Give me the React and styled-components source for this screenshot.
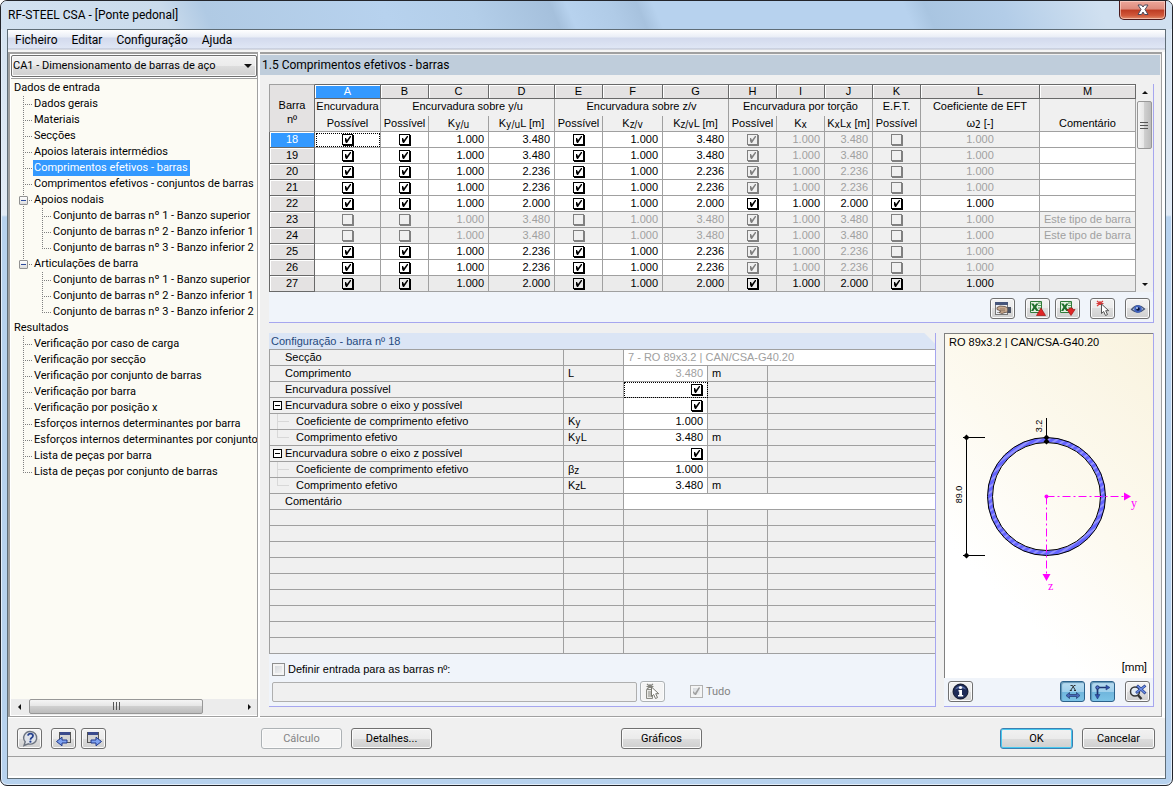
import React, { useState } from 'react';
import styled, { createGlobalStyle, css } from 'styled-components';

const GlobalStyle = createGlobalStyle`
    * { box-sizing: border-box; }
    body {
        margin: 0;
        background: #fff;
        color: #000;
        font-family: "Liberation Sans", Arial, sans-serif;
        font-size: 11px;
        line-height: 14px;
    }
    button, input, select { font: inherit; color: inherit; }
`;

const tahoma = 'Roboto, Tahoma, sans-serif';
const segoe = 'Roboto, "Segoe UI", sans-serif';

const Window = styled.div`
    display: flex;
    flex-direction: column;
    min-height: 100vh;
    padding: 0 6px 6px;
    border: 1px solid #23252b;
    border-radius: 7px;
    background: linear-gradient(#d3e2f1 0, #e2ebf5 214px, #b7d2ee 216px, #b7d2ee 100%);
    box-shadow: inset 0 0 0 1px #e3eefa;
`;

const TitleBar = styled.header`
    display: flex;
    justify-content: space-between;
    align-items: flex-start;
    height: 28px;
    margin: 0 -6px;
    padding: 0 6px;
    border-radius: 6px 6px 0 0;
    background: linear-gradient(67deg, #d3e2f1 0, #cadbec 155px, #b0cae4 195px, #b7d2ee 360px, #b3cee9 440px, #a5c0dc 515px, #b7d2ee 530px, #b0cbe7 570px, #a7c2de 595px, #b7d2ee 610px, #b7d2ee 840px, #a9c5e1 860px, #b3cde8 930px, #d0e0f0 1020px);
`;

const Title = styled.h1`
    margin: 0;
    padding: 5px 1px;
    font: 400 12px/18px ${segoe};
`;

const CloseButton = styled.button`
    display: grid;
    place-items: center;
    width: 47px;
    height: 19px;
    padding: 0;
    border: 1px solid #4a1a1c;
    border-top: 0;
    border-radius: 0 0 5px 5px;
    background: linear-gradient(#eda79a 0, #dd8a7c 45%, #bd3b22 50%, #d0573a 80%, #e08d6c 100%);
    box-shadow: inset 0 0 0 1px rgba(255, 220, 210, 0.6);
`;

const Client = styled.div`
    display: flex;
    flex-direction: column;
    flex: 1;
    border: 1px solid #5f6d77;
    background: #f0f0f0;
`;

const MenuBar = styled.nav`
    display: flex;
    gap: 14px;
    height: 22px;
    padding: 0 7px;
    background: linear-gradient(#fff 0, #e9edf6 7px, #d3daed 8px, #dfe6f5 18px, #b6bccc 19px, #f5f5f5 20px, #f5f5f5 22px);
`;

const MenuLink = styled.a`
    color: #000;
    font: 400 12px/20px ${segoe};
    text-decoration: none;
`;

const Main = styled.main`
    display: flex;
    flex: 1;
    padding-right: 3px;
    border-bottom: 1px solid #fff;
    background: #fff;
`;

const Sidebar = styled.aside`
    display: flex;
    flex-direction: column;
    width: 250px;
    margin-right: 2px;
    padding: 1px 0 1px 1px;
    border: 1px solid #a0a0a0;
    border-width: 2px 1px 1px 2px;
`;

const SelectWrap = styled.div`
    display: grid;
    align-items: center;
    > * { grid-area: 1 / 1; }
    svg {
        justify-self: end;
        margin-right: 5px;
        pointer-events: none;
    }
`;

const Select = styled.select`
    width: 100%;
    height: 22px;
    padding: 0 1px;
    border: 1px solid #707070;
    border-radius: 2px;
    background: linear-gradient(#f2f2f2 0, #ebebeb 50%, #dddddd 50%, #cfcfcf 100%);
    box-shadow: inset 0 0 0 1px #fafafa;
    font-family: ${tahoma};
    appearance: none;
`;

const Tree = styled.ul`
    flex: 1;
    margin: 1px 0 0;
    padding: 1px 0 0;
    overflow: hidden;
    border-top: 1px solid #a0a0a0;
    background: #fcfbf4;
    font-family: ${tahoma};
    list-style: none;
`;

const TreeRow = styled.li`
    display: flex;
    align-items: center;
    height: 16px;
    padding-left: ${p => (p.$root ? 2 : 12)}px;
`;

const dotsDown = 'repeating-linear-gradient(to bottom, #808080 0 1px, transparent 1px 2px) 0 0';
const dotsRight = 'repeating-linear-gradient(to right, #808080 0 1px, transparent 1px 2px) 0 8px';

// one 19px step of the dotted tree lines
const Guide = styled.span`
    display: grid;
    align-items: center;
    flex: none;
    align-self: stretch;
    width: ${p => (p.$branch ? 10 : 19)}px;
    background:
        ${p => p.$down ? `${dotsDown} / 1px ${p.$end ? '9px' : '100%'} no-repeat` : 'none'}
        ${p => p.$branch ? `, ${dotsRight} / 10px 1px no-repeat` : ''};
`;

const TreeToggle = styled.button`
    display: grid;
    place-items: center;
    width: 9px;
    height: 9px;
    margin: 0 0 0 -4px;
    padding: 0;
    border: 1px solid #919191;
    border-radius: 1px;
    background: linear-gradient(#fff, #dcdcdc);
    &::before {
        content: '';
        width: 5px;
        height: 1px;
        background: #2b4a9b;
    }
`;

const TreeLink = styled.a`
    padding: 0 2px 0 1px;
    background: ${p => (p.$active ? '#3399ff' : 'none')};
    color: ${p => (p.$active ? '#fff' : '#000')};
    line-height: 16px;
    text-decoration: none;
    white-space: nowrap;
`;

const HScroll = styled.div`
    display: flex;
    justify-content: space-between;
    align-items: flex-start;
    height: 16px;
    background: #ececec;
`;

const ScrollArrow = styled.button`
    display: grid;
    place-items: center;
    width: 16px;
    height: 16px;
    padding: 0;
    border: 0;
    background: none;
`;

const thumb = css`
    display: grid;
    place-items: center;
    border: 1px solid #979797;
    border-radius: 2px;
`;

const HThumb = styled.div`
    ${thumb}
    width: 174px;
    height: 15px;
    margin-right: auto;
    margin-left: 2px;
    background: linear-gradient(#f5f5f5 0, #e6e6e6 45%, #cfcfcf 50%, #bcbcbc 100%);
`;

const VThumb = styled.div`
    ${thumb}
    width: 15px;
    height: 48px;
    margin: 1px 0 auto;
    background: linear-gradient(to right, #f5f5f5 0, #e6e6e6 45%, #cfcfcf 50%, #bcbcbc 100%);
`;

const Content = styled.section`
    display: flex;
    flex-direction: column;
    flex: 1;
    min-width: 0;
    border: 1px solid #a0a0a0;
    border-width: 2px 1px 1px 0;
    background: #f0f0f0;
`;

const ContentTitle = styled.h2`
    margin: 1px 1px 9px 0;
    padding: 0 2px;
    background: #bfcddb;
    font: 400 12px/20px ${segoe};
`;

const Panels = styled.div`
    display: flex;
    flex-direction: column;
    flex: 1;
    gap: 10px;
    padding: 0 7px 9px 9px;
`;

const edge = css`
    border: 0 solid #a6a6ef;
    border-width: 0 1px 1px 0;
`;

const GridPanel = styled.div`
    ${edge}
    background: #f0f4fa;
`;

const GridArea = styled.div`
    display: flex;
    justify-content: space-between;
    background: #f0f0f0;
`;

const VScroll = styled.div`
    display: flex;
    flex-direction: column;
    flex: none;
    width: 16px;
    background: #f0f0f0;
`;

const Grid = styled.table`
    flex: 1;
    width: 100%;
    margin-right: 1px;
    border-spacing: 0;
    table-layout: fixed;
    td, th {
        padding: 0;
        overflow: hidden;
        font-weight: 400;
        white-space: nowrap;
    }
`;

const Letter = styled.th`
    height: 15px;
    border: 1px solid #696969;
    border-left: 0;
    background: ${p => (p.$active ? '#3399ff' : '#e4e2e2')};
    box-shadow: inset 1px 1px 0 #fff;
    color: ${p => (p.$active ? '#fff' : '#000')};
    line-height: 13px;
`;

const Head = styled.th`
    height: ${p => (p.$low ? 16 : 17)}px;
    border-right: 1px solid #a0a0a0;
    border-bottom: ${p => (p.$low ? '1px solid #a0a0a0' : 0)};
    background: #f0f0f0;
    line-height: 14px;
    vertical-align: top;
`;

const Corner = styled.th`
    border: 1px solid #a0a0a0;
    border-right-color: #696969;
    background: #e4e2e2;
    line-height: 14px;
    && { padding-top: 8px; }
`;

const RowHead = styled.th`
    height: 16px;
    border: 0 solid #696969;
    border-width: 0 1px 1px;
    background: ${p => (p.$active ? '#3399ff' : '#e4e2e2')};
    box-shadow: inset 1px 1px 0 #fff;
    color: ${p => (p.$active ? '#fff' : '#000')};
    line-height: 15px;
`;

const Cell = styled.td`
    height: 16px;
    border: 0 solid #a0a0a0;
    border-width: 0 1px 1px 0;
    background: ${p => (p.$off ? '#f0f0f0' : p.$last ? '#ebebeb' : '#fff')};
    color: ${p => (p.$off ? '#a0a0a0' : '#000')};
    line-height: 15px;
    text-align: ${p => p.$align || 'center'};
    outline: ${p => (p.$focus ? '1px dotted #000' : 'none')};
    outline-offset: -2px;
    && { padding: ${p => (p.$align ? '0 4px' : 0)}; }
`;

const Sub = styled.span`
    font: 10px/0 "DejaVu Sans Condensed", sans-serif;
    vertical-align: -1px;
`;

// flat check box with a hard shadow, as the cells of the grids use
const CellCheck = styled.input.attrs({ type: 'checkbox' })`
    display: inline-block;
    width: 11px;
    height: 11px;
    margin: 2px 0 0;
    border: 1px solid currentColor;
    box-shadow: 1px 1px 0 currentColor;
    color: ${p => (p.$off ? '#808080' : '#000')};
    vertical-align: top;
    appearance: none;
    &:checked::before {
        content: '';
        display: block;
        width: 9px;
        height: 9px;
        background: currentColor;
        clip-path: polygon(2px 3px, 3px 3px, 4px 5px, 7px 1px, 8px 1px, 8px 2px, 4px 8px, 3px 8px, 2px 6px);
    }
`;

const GridTools = styled.div`
    display: flex;
    justify-content: flex-end;
    gap: 10px;
    padding: 6px 3px 2px;
    height: 30px;
    button:nth-child(3) { margin-left: -5px; }
`;

const IconButton = styled.button`
    display: grid;
    place-items: center;
    width: 25px;
    height: 21px;
    padding: 0;
    border: 1px solid ${p => (p.$on ? '#2c628b' : p.disabled ? '#adb2b5' : '#707070')};
    border-radius: 3px;
    background: ${p => p.$on
        ? 'linear-gradient(#b9dcf0 0, #9fd0ec 50%, #6fb5dc 50%, #7cc3e6 100%)'
        : p.disabled ? '#f4f4f4' : 'linear-gradient(#f2f2f2 0, #ebebeb 50%, #dddddd 50%, #cfcfcf 100%)'};
    box-shadow: ${p => (p.$on ? 'inset 1px 1px 1px #5f93b3' : 'inset 0 0 0 1px #fbfbfb')};
`;

const Lower = styled.div`
    display: flex;
    flex: 1;
    gap: 8px;
`;

const Details = styled.section`
    ${edge}
    display: flex;
    flex-direction: column;
    flex: 1;
    background: #f0f4fa;
`;

const DetailsTitle = styled.h3`
    margin: 0;
    padding: 0 2px;
    background: linear-gradient(225deg, #f0f0f0 7px, #dbe5f5 8px);
    color: #1f497d;
    font: 400 11px/16px "Liberation Sans", Arial, sans-serif;
`;

const DetailsTable = styled.table`
    width: 100%;
    border-top: 1px solid #a0a0a0;
    border-left: 1px solid #a0a0a0;
    border-spacing: 0;
    table-layout: fixed;
    background: #f0f0f0;
    th {
        padding: 0;
        border: 0 solid #a0a0a0;
        border-width: 0 1px 1px 0;
        font-weight: 400;
        text-align: left;
    }
`;

const DetailCell = styled.td`
    height: 16px;
    padding: 0 4px;
    border: 0 solid #a0a0a0;
    border-width: 0 1px 1px 0;
    background: ${p => (p.$white ? '#fff' : 'none')};
    color: ${p => (p.$off ? '#a0a0a0' : '#000')};
    line-height: 15px;
    text-align: ${p => (p.$right ? 'right' : 'left')};
    outline: ${p => (p.$focus ? '1px dotted #000' : 'none')};
    outline-offset: -1px;
    ${CellCheck} { margin-right: 1px; }
    &:last-child { border-right: 0; }
`;

const DetailName = styled.div`
    display: flex;
    align-items: center;
    height: 15px;
    line-height: 15px;
`;

const Gutter = styled.span`
    display: grid;
    align-items: center;
    width: 15px;
    padding-left: 3px;
`;

const Elbow = styled.span`
    align-self: flex-start;
    flex: none;
    width: 12px;
    height: ${p => (p.$end ? 8 : 15)}px;
    margin: 0 7px;
    border-left: 1px solid #d8d8d8;
    background: linear-gradient(#d8d8d8, #d8d8d8) 0 7px / 12px 1px no-repeat;
`;

const Expander = styled.button`
    display: grid;
    place-items: center;
    width: 9px;
    height: 9px;
    padding: 0;
    border: 1px solid #000;
    background: #fff;
    &::before {
        content: '';
        width: 5px;
        height: 1px;
        background: #000;
    }
`;

const DefineArea = styled.div`
    display: flex;
    flex-direction: column;
    gap: 5px;
    padding: 8px 3px 4px;
`;

const DefineRow = styled.div`
    display: flex;
    align-items: center;
    gap: 3px;
`;

const CheckLabel = styled.label`
    display: flex;
    align-items: center;
    gap: 3px;
    color: ${p => (p.$off ? '#838383' : '#000')};
    font-family: ${p => (p.$off ? tahoma : 'inherit')};
    margin-left: ${p => (p.$off ? '22px' : 0)};
`;

const Check = styled.input.attrs({ type: 'checkbox' })`
    width: 13px;
    height: 13px;
    margin: 0;
    border: 1px solid ${p => (p.disabled ? '#b1b1b1' : '#8e8f8f')};
    background: linear-gradient(135deg, #cfd3d8, #f8f8f8);
    box-shadow: inset 0 0 0 2px #f4f4f4;
    appearance: none;
    &:checked::before {
        content: '';
        display: block;
        width: 11px;
        height: 11px;
        background: #a0a0a0;
        clip-path: polygon(2px 5px, 4px 7px, 8px 1px, 9px 2px, 5px 9px, 4px 9px, 2px 7px);
    }
`;

const BarsInput = styled.input`
    flex: 0 1 365px;
    min-width: 0;
    height: 20px;
    padding: 0 4px;
    border: 1px solid #afafaf;
    border-radius: 2px;
    background: #f0f0f0;
`;

const SectionPanel = styled.section`
    ${edge}
    display: flex;
    flex-direction: column;
    flex: none;
    width: 210px;
    background: #f0f4fa;
`;

const SectionView = styled.div`
    display: flex;
    flex-direction: column;
    flex: 1;
    padding: 1px 4px 3px;
    border: 0 solid #808080;
    border-width: 1px 0 0 1px;
    background: linear-gradient(225deg, #f9f3df 0, #fdfaf0 45%, #fff 75%);
    svg {
        margin: 9px -4px auto;
    }
`;

const Units = styled.span`
    align-self: flex-end;
    margin-right: 2px;
    font-family: ${tahoma};
`;

const SectionTools = styled.div`
    display: flex;
    gap: 5px;
    height: 28px;
    padding: 3px 3px 3px 4px;
    button:nth-child(2) { margin-left: auto; }
    button:last-child { margin-left: 5px; }
`;

const Footer = styled.footer`
    display: grid;
    grid-template-columns: 244px 360px 1fr auto;
    padding: 10px 10px 7px 9px;
    border-bottom: 1px solid #a0a0a0;
`;

const FooterGroup = styled.div`
    display: flex;
    gap: 9px;
    ${IconButton}:last-child { margin-left: -4px; }
`;

const Button = styled.button`
    width: ${p => (p.$narrow ? 73 : 81)}px;
    height: 21px;
    padding: 0;
    border: 1px solid ${p => (p.$main ? '#3c7fb1' : p.disabled ? '#adb2b5' : '#707070')};
    border-radius: 3px;
    background: ${p => (p.disabled ? '#f4f4f4' : 'linear-gradient(#f2f2f2 0, #ebebeb 50%, #dddddd 50%, #cfcfcf 100%)')};
    box-shadow: inset 0 0 0 1px ${p => (p.$main ? '#48c9f0' : '#fbfbfb')};
    color: ${p => (p.disabled ? '#838383' : '#000')};
    font-family: ${tahoma};
`;

const StatusBar = styled.div`
    height: 21px;
    border-bottom: 2px solid #fff;
`;

/* ---- icons ---- */

const Arrow = ({ dir }) => {
    const d = {
        left: 'M6 1v6L3 4z',
        right: 'M3 1v6l3-3z',
        up: 'M1 6h6L4 3z',
        down: 'M1 3h6L4 6z',
        big: 'M0 2h8L4 6z',
    };
    return <svg width="8" height="8"><path d={d[dir]} fill="#111" /></svg>;
};

const Grip = ({ vertical }) => (
    <svg width="9" height="9">
        <path
            d={vertical ? 'M0 1.5h8M0 4.5h8M0 7.5h8' : 'M1.5 0v8M4.5 0v8M7.5 0v8'}
            stroke="#555"
            strokeWidth="1"
        />
    </svg>
);

const CloseIcon = () => (
    <svg width="14" height="12" viewBox="0 0 14 12">
        <path d="M2 1h3.500L7 3l1.500-2H12L9 5.500 12 10.500H8.500L7 8l-1.500 2.500H2L5 5.500z" fill="#fff" stroke="#4b4a5c" />
    </svg>
);

const HandIcon = () => (
    <svg width="18" height="16" viewBox="0 0 18 16">
        <rect x="1.500" y="1.500" width="12" height="12" fill="#eef0f4" stroke="#777" />
        <rect x="1" y="1" width="13" height="3" fill="#46557a" />
        <path d="M3 11.500h8" stroke="#999" />
        <path d="M3 6.500l3-1.500 5 .5 3 1.500v4l-3 .5-3 1-3-1 2-1.500-4-1.500z" fill="#c9ab90" stroke="#5f4a3c" strokeWidth=".8" />
        <path d="M6 8h5M7 9.800h4" stroke="#7d6350" strokeWidth=".7" />
        <path d="M13.500 6h3.500v6h-3.500z" fill="#4a5263" />
    </svg>
);

const ExcelIcon = ({ up }) => (
    <svg width="18" height="17" viewBox="0 0 18 17">
        <path d="M1.500 1.500h11v11h-11z" fill="#e5f2e3" stroke="#2f7a3a" />
        <path d="M9 3h3M9 5.500h3M9 8h3M9 10.500h3" stroke="#4c9a55" />
        <path d="M2 3.500h2.500l1.300 2 1.400-2H9.500L7.200 7l2.500 4H7.200L5.700 8.700 4.300 11H2l2.400-4z" fill="#1f6f2c" />
        <path d={up ? 'M12 8l4.500 7.500h-9z' : 'M8 9.500h2.500V8h3v1.500H16l-4 6z'} fill="#e02525" stroke="#9c1212" strokeWidth=".7" />
    </svg>
);

const PickIcon = ({ grey }) => (
    <svg width="16" height="17" viewBox="0 0 16 17">
        {grey && <path d="M1.500 6.500h6v9h-6zM3 9h3M3 11h3M3 13h3" fill="#e8e8e4" stroke="#8b8b85" />}
        <path d="M2 1l6 5M8 1L2 6M5 1v4M1.500 3.500h7" stroke={grey ? '#85857f' : '#d83a3a'} strokeWidth="1.200" />
        <path d="M6.500 4v9.500l2.200-2 1.800 4 2-.9-1.800-3.900h3z" fill="#fff" stroke={grey ? '#77776f' : '#555'} />
    </svg>
);

const EyeIcon = () => (
    <svg width="16" height="12" viewBox="0 0 16 12">
        <path d="M1.500 6.500Q8-1 14.500 6Q8 12 1.500 6.500z" fill="#aebfe6" stroke="#4a5878" strokeWidth="1.200" />
        <circle cx="8" cy="6" r="3.800" fill="#3f62bd" />
        <circle cx="8" cy="6" r="1.800" fill="#0c1740" />
        <circle cx="7" cy="5" r="1" fill="#bcd0f7" />
    </svg>
);

const InfoIcon = () => (
    <svg width="17" height="17" viewBox="0 0 17 17">
        <circle cx="8.500" cy="8.500" r="7.500" fill="#1e2b57" stroke="#0d1328" />
        <path d="M3 6.500a6 6 0 0 1 11 0Q9 4 3 6.500z" fill="#5a6fa8" />
        <circle cx="8.500" cy="4.500" r="1.600" fill="#fff" />
        <path d="M6.500 7H10v5h1.200v1.500H6V12h1.200V8.500h-.7z" fill="#fff" />
    </svg>
);

const DimIcon = () => (
    <svg width="18" height="16" viewBox="0 0 18 16">
        <path d="M6.500 1.500h2l3 5M11.500 1.500h-1.500l-3.500 5M5.800 6.500h2M10 6.500h2" fill="none" stroke="#222" strokeWidth=".9" />
        <path d="M2 11.500l3.500-3v2h7v-2l3.500 3-3.500 3v-2h-7v2z" fill="#4668ba" stroke="#22386f" strokeWidth=".7" />
    </svg>
);

const AxesIcon = () => (
    <svg width="18" height="16" viewBox="0 0 18 16">
        <path d="M3.500 11V3.500H13" fill="none" stroke="#1e3470" strokeWidth="1.700" />
        <path d="M12 1l4 2.500L12 6zM1 10.500h5l-2.500 4.500z" fill="#2f52ad" stroke="#1e3470" strokeWidth=".5" />
        <circle cx="3.500" cy="3.500" r="1.700" fill="#5275cf" stroke="#1e3470" />
    </svg>
);

const ZoomIcon = () => (
    <svg width="18" height="17" viewBox="0 0 18 17">
        <path d="M8 11l4.500 5" stroke="#333" strokeWidth="2.400" />
        <circle cx="6" cy="8.500" r="4.500" fill="#e2ebf5" stroke="#333" strokeWidth="1.500" />
        <path d="M16.500 2.500L7 10M8 2.500l8.500 8" stroke="#27408b" strokeWidth="2.800" />
        <path d="M16 3L7.500 9.500M8.500 3l7.500 7" stroke="#6d8fe8" strokeWidth="1.300" />
    </svg>
);

const HelpIcon = () => (
    <svg width="18" height="17" viewBox="0 0 18 17">
        <path d="M9.500 1.500a6.300 6.300 0 1 1-2 12.300L3 15.500l1.200-3.700A6.300 6.300 0 0 1 9.500 1.500z" fill="#dfe3ea" stroke="#6d7480" strokeWidth="1.400" />
        <path d="M7 5.700q.3-2 2.500-2t2.500 2q0 1.200-1.400 2-1.100.7-1.100 2" fill="none" stroke="#24408f" strokeWidth="1.800" />
        <circle cx="9.400" cy="11.700" r="1.100" fill="#24408f" />
    </svg>
);

const PageIcon = ({ next }) => (
    <svg width="18" height="16" viewBox="0 0 18 16">
        <rect x={next ? 2.5 : 4.5} y="1.500" width="11" height="10" fill="#d4d4d4" stroke="#555" />
        <rect x={next ? 3 : 5} y="1" width="10" height="3" fill="#3a4a8c" />
        <path
            d={next ? 'M6 9h5V6.200l5.500 4.300-5.500 4.300V12H6z' : 'M12 9H7V6.200L1.500 10.500 7 14.800V12h5z'}
            fill="#7ea2f0"
            stroke="#20398c"
        />
    </svg>
);

const SectionDrawing = () => (
    <svg width="208" height="264" viewBox="0 0 208 264">
        <defs>
            <pattern id="hatch" width="5" height="5" patternUnits="userSpaceOnUse" patternTransform="rotate(-35)">
                <rect width="5" height="5" fill="#6464ff" />
                <path d="M0 1h5" stroke="#c4c4ff" strokeWidth="1" />
            </pattern>
        </defs>
        <circle cx="101.500" cy="138.500" r="56.500" fill="none" stroke="url(#hatch)" strokeWidth="5" />
        <circle cx="101.500" cy="138.500" r="59" fill="none" stroke="#000" />
        <circle cx="101.500" cy="138.500" r="54" fill="none" stroke="#000" />
        <path d="M101.500 60v26M21.500 77v123M18 79.500h22M18 197.500h22" stroke="#000" />
        <path d="M98.500 79.500l3-3 3 3-3 3zM98.500 83.500l3-3 3 3-3 3zM18.500 79.500l3-3 3 3-3 3zM18.500 197.500l3-3 3 3-3 3z" />
        <path d="M101.500 138.500H180M101.500 138.500V217" fill="none" stroke="#ff00ff" strokeDasharray="8 3 2 3" />
        <g fill="#ff00ff">
            <circle cx="101.500" cy="138.500" r="2" />
            <path d="M179 134.500v8l7-4zM97.500 216h8l-4 7z" />
            <g fontFamily="Liberation Serif, serif" fontSize="12">
                <text x="186" y="149">y</text>
                <text x="103" y="232">z</text>
            </g>
        </g>
        <g fontFamily="Liberation Sans, sans-serif" fontSize="9" textAnchor="middle">
            <text transform="translate(17 136.500) rotate(-90)">89.0</text>
            <text transform="translate(97 68) rotate(-90)">3.2</text>
        </g>
    </svg>
);

/* ---- data ---- */

const sets = ['Conjunto de barras nº 1 - Banzo superior', 'Conjunto de barras nº 2 - Banzo inferior 1', 'Conjunto de barras nº 3 - Banzo inferior 2'];

const tree = [
    { label: 'Dados de entrada', children: [
        { label: 'Dados gerais' },
        { label: 'Materiais' },
        { label: 'Secções' },
        { label: 'Apoios laterais intermédios' },
        { label: 'Comprimentos efetivos - barras' },
        { label: 'Comprimentos efetivos - conjuntos de barras' },
        { label: 'Apoios nodais', children: sets },
        { label: 'Articulações de barra', children: sets },
    ] },
    { label: 'Resultados', children: [
        { label: 'Verificação por caso de carga' },
        { label: 'Verificação por secção' },
        { label: 'Verificação por conjunto de barras' },
        { label: 'Verificação por barra' },
        { label: 'Verificação por posição x' },
        { label: 'Esforços internos determinantes por barra' },
        { label: 'Esforços internos determinantes por conjunto' },
        { label: 'Lista de peças por barra' },
        { label: 'Lista de peças por conjunto de barras' },
    ] },
];

const widths = [46, 66, 48, 60, 66, 48, 60, 66, 48, 48, 48, 48, 119, null];
const letters = 'ABCDEFGHIJKLM'.split('');

// off: the bar cannot buckle at all, eft: torsion and EFT columns are open
const bars = [
    { no: 18, length: '3.480' },
    { no: 19, length: '3.480' },
    { no: 20, length: '2.236' },
    { no: 21, length: '2.236' },
    { no: 22, length: '2.000', eft: true },
    { no: 23, length: '3.480', off: true },
    { no: 24, length: '3.480', off: true },
    { no: 25, length: '2.236' },
    { no: 26, length: '2.236' },
    { no: 27, length: '2.000', eft: true, last: true },
];

const details = [
    { name: 'Secção', wide: '7 - RO 89x3.2 | CAN/CSA-G40.20' },
    { name: 'Comprimento', symbol: 'L', value: '3.480', unit: 'm', off: true },
    { name: 'Encurvadura possível', check: true, focus: true },
    { name: 'Encurvadura sobre o eixo y possível', check: true, open: true },
    { name: 'Coeficiente de comprimento efetivo', symbol: <>K<Sub>y</Sub></>, value: '1.000', child: true },
    { name: 'Comprimento efetivo', symbol: <>K<Sub>y</Sub>L</>, value: '3.480', unit: 'm', child: true, end: true },
    { name: 'Encurvadura sobre o eixo z possível', check: true, open: true },
    { name: 'Coeficiente de comprimento efetivo', symbol: <>β<Sub>z</Sub></>, value: '1.000', child: true },
    { name: 'Comprimento efetivo', symbol: <>K<Sub>z</Sub>L</>, value: '3.480', unit: 'm', child: true, end: true },
    { name: 'Comentário', wide: ' ' },
];

const TreeView = () => {
    const [active, setActive] = useState('Comprimentos efetivos - barras');
    const link = label => (
        <TreeLink href="#" $active={label === active} onClick={() => setActive(label)}>{label}</TreeLink>
    );

    return (
        <Tree>
            {tree.map(root => (
                <React.Fragment key={root.label}>
                    <TreeRow $root>{link(root.label)}</TreeRow>
                    {root.children.map((item, i) => {
                        const end = i === root.children.length - 1;
                        return (
                            <React.Fragment key={item.label}>
                                <TreeRow>
                                    <Guide $down $branch $end={end}>
                                        {item.children && <TreeToggle aria-label={item.label} />}
                                    </Guide>
                                    {link(item.label)}
                                </TreeRow>
                                {item.children && item.children.map((label, j) => (
                                    <TreeRow key={label}>
                                        <Guide $down={!end} />
                                        <Guide $down $branch $end={j === 2} />
                                        {link(label)}
                                    </TreeRow>
                                ))}
                            </React.Fragment>
                        );
                    })}
                </React.Fragment>
            ))}
        </Tree>
    );
};

const BarRow = ({ bar, active }) => {
    const { no, length, off, eft, last } = bar;
    const check = (name, checked, disabled, focus) => (
        <Cell $off={disabled} $last={last} $focus={focus}>
            <CellCheck aria-label={`${name} ${no}`} defaultChecked={checked} $off={disabled} />
        </Cell>
    );
    const number = (value, disabled, align = 'right') => (
        <Cell $off={disabled} $last={last} $align={align}>{value}</Cell>
    );

    return (
        <tr>
            <RowHead $active={active}>{no}</RowHead>
            {check('Encurvadura', !off, off, active)}
            {check('Encurvadura y/u', !off, off)}
            {number('1.000', off)}
            {number(length, off)}
            {check('Encurvadura z/v', !off, off)}
            {number('1.000', off)}
            {number(length, off)}
            {check('Torção', true, !eft)}
            {number('1.000', !eft)}
            {number(length, !eft)}
            {check('E.F.T.', eft, !eft)}
            {number('1.000', !eft, 'center')}
            {number(off ? 'Este tipo de barra' : '', off, 'left')}
        </tr>
    );
};

const BarGrid = () => (
    <Grid>
        <colgroup>
            {widths.map((w, i) => <col key={i} width={w || undefined} />)}
        </colgroup>
        <thead>
            <tr>
                <Corner rowSpan={3}>Barra<br />nº</Corner>
                {letters.map(l => <Letter key={l} $active={l === 'A'}>{l}</Letter>)}
            </tr>
            <tr>
                <Head>Encurvadura</Head>
                <Head colSpan={3}>Encurvadura sobre y/u</Head>
                <Head colSpan={3}>Encurvadura sobre z/v</Head>
                <Head colSpan={3}>Encurvadura por torção</Head>
                <Head>E.F.T.</Head>
                <Head>Coeficiente de EFT</Head>
                <Head />
            </tr>
            <tr>
                <Head $low>Possível</Head>
                <Head $low>Possível</Head>
                <Head $low>K<Sub>y/u</Sub></Head>
                <Head $low>K<Sub>y/u</Sub>L [m]</Head>
                <Head $low>Possível</Head>
                <Head $low>K<Sub>z/v</Sub></Head>
                <Head $low>K<Sub>z/v</Sub>L [m]</Head>
                <Head $low>Possível</Head>
                <Head $low>K<Sub>x</Sub></Head>
                <Head $low>K<Sub>x</Sub>L<Sub>x</Sub> [m]</Head>
                <Head $low>Possível</Head>
                <Head $low>ω<Sub>2</Sub> [-]</Head>
                <Head $low>Comentário</Head>
            </tr>
        </thead>
        <tbody>
            {bars.map((bar, i) => <BarRow key={bar.no} bar={bar} active={i === 0} />)}
        </tbody>
    </Grid>
);

const DetailRow = ({ row }) => (
    <tr>
        <th>
            <DetailName>
                {row.child ? <Elbow $end={row.end} /> : <Gutter>{row.open && <Expander aria-label={row.name} />}</Gutter>}
                {row.name}
            </DetailName>
        </th>
        <DetailCell>{row.symbol}</DetailCell>
        {row.wide
            ? <DetailCell colSpan={3} $white $off>{row.wide}</DetailCell>
            : (
                <>
                    <DetailCell $white={row.name} $right $off={row.off} $focus={row.focus}>
                        {row.check ? <CellCheck aria-label={row.name} defaultChecked /> : row.value}
                    </DetailCell>
                    <DetailCell>{row.unit}</DetailCell>
                    <DetailCell />
                </>
            )}
    </tr>
);

const App = () => (
    <>
        <GlobalStyle />
        <Window>
            <TitleBar>
                <Title>RF-STEEL CSA - [Ponte pedonal]</Title>
                <CloseButton aria-label="Fechar"><CloseIcon /></CloseButton>
            </TitleBar>
            <Client>
                <MenuBar>
                    {['Ficheiro', 'Editar', 'Configuração', 'Ajuda'].map(m => <MenuLink key={m} href="#">{m}</MenuLink>)}
                </MenuBar>
                <Main>
                    <Sidebar>
                        <SelectWrap>
                            <Select aria-label="Caso">
                                <option>CA1 - Dimensionamento de barras de aço</option>
                            </Select>
                            <Arrow dir="big" />
                        </SelectWrap>
                        <TreeView />
                        <HScroll>
                            <ScrollArrow aria-label="Esquerda"><Arrow dir="left" /></ScrollArrow>
                            <HThumb><Grip /></HThumb>
                            <ScrollArrow aria-label="Direita"><Arrow dir="right" /></ScrollArrow>
                        </HScroll>
                    </Sidebar>
                    <Content>
                        <ContentTitle>1.5 Comprimentos efetivos - barras</ContentTitle>
                        <Panels>
                            <GridPanel>
                                <GridArea>
                                    <BarGrid />
                                    <VScroll>
                                        <ScrollArrow aria-label="Para cima"><Arrow dir="up" /></ScrollArrow>
                                        <VThumb><Grip vertical /></VThumb>
                                        <ScrollArrow aria-label="Para baixo"><Arrow dir="down" /></ScrollArrow>
                                    </VScroll>
                                </GridArea>
                                <GridTools>
                                    <IconButton aria-label="Editar"><HandIcon /></IconButton>
                                    <IconButton aria-label="Exportar"><ExcelIcon up /></IconButton>
                                    <IconButton aria-label="Importar"><ExcelIcon /></IconButton>
                                    <IconButton aria-label="Selecionar"><PickIcon /></IconButton>
                                    <IconButton aria-label="Ver"><EyeIcon /></IconButton>
                                </GridTools>
                            </GridPanel>
                            <Lower>
                                <Details>
                                    <DetailsTitle>Configuração - barra nº 18</DetailsTitle>
                                    <DetailsTable>
                                        <colgroup>
                                            <col />
                                            <col width="60" />
                                            <col width="84" />
                                            <col width="60" />
                                            <col width="167" />
                                        </colgroup>
                                        <tbody>
                                            {details.map((row, i) => <DetailRow key={i} row={row} />)}
                                            {Array.from({ length: 9 }, (_, i) => <DetailRow key={i} row={{}} />)}
                                        </tbody>
                                    </DetailsTable>
                                    <DefineArea>
                                        <CheckLabel><Check />Definir entrada para as barras nº:</CheckLabel>
                                        <DefineRow>
                                            <BarsInput aria-label="Barras nº" disabled />
                                            <IconButton aria-label="Selecionar barras" disabled><PickIcon grey /></IconButton>
                                            <CheckLabel $off><Check disabled defaultChecked />Tudo</CheckLabel>
                                        </DefineRow>
                                    </DefineArea>
                                </Details>
                                <SectionPanel>
                                    <SectionView>
                                        RO 89x3.2 | CAN/CSA-G40.20
                                        <SectionDrawing />
                                        <Units>[mm]</Units>
                                    </SectionView>
                                    <SectionTools>
                                        <IconButton aria-label="Informação"><InfoIcon /></IconButton>
                                        <IconButton aria-label="Cotas" $on><DimIcon /></IconButton>
                                        <IconButton aria-label="Eixos" $on><AxesIcon /></IconButton>
                                        <IconButton aria-label="Vista total"><ZoomIcon /></IconButton>
                                    </SectionTools>
                                </SectionPanel>
                            </Lower>
                        </Panels>
                    </Content>
                </Main>
                <Footer>
                    <FooterGroup>
                        <IconButton aria-label="Ajuda"><HelpIcon /></IconButton>
                        <IconButton aria-label="Anterior"><PageIcon /></IconButton>
                        <IconButton aria-label="Seguinte"><PageIcon next /></IconButton>
                    </FooterGroup>
                    <FooterGroup>
                        <Button disabled>Cálculo</Button>
                        <Button>Detalhes...</Button>
                    </FooterGroup>
                    <FooterGroup>
                        <Button>Gráficos</Button>
                    </FooterGroup>
                    <FooterGroup>
                        <Button $narrow $main>OK</Button>
                        <Button $narrow>Cancelar</Button>
                    </FooterGroup>
                </Footer>
                <StatusBar />
            </Client>
        </Window>
    </>
);

export default App;
